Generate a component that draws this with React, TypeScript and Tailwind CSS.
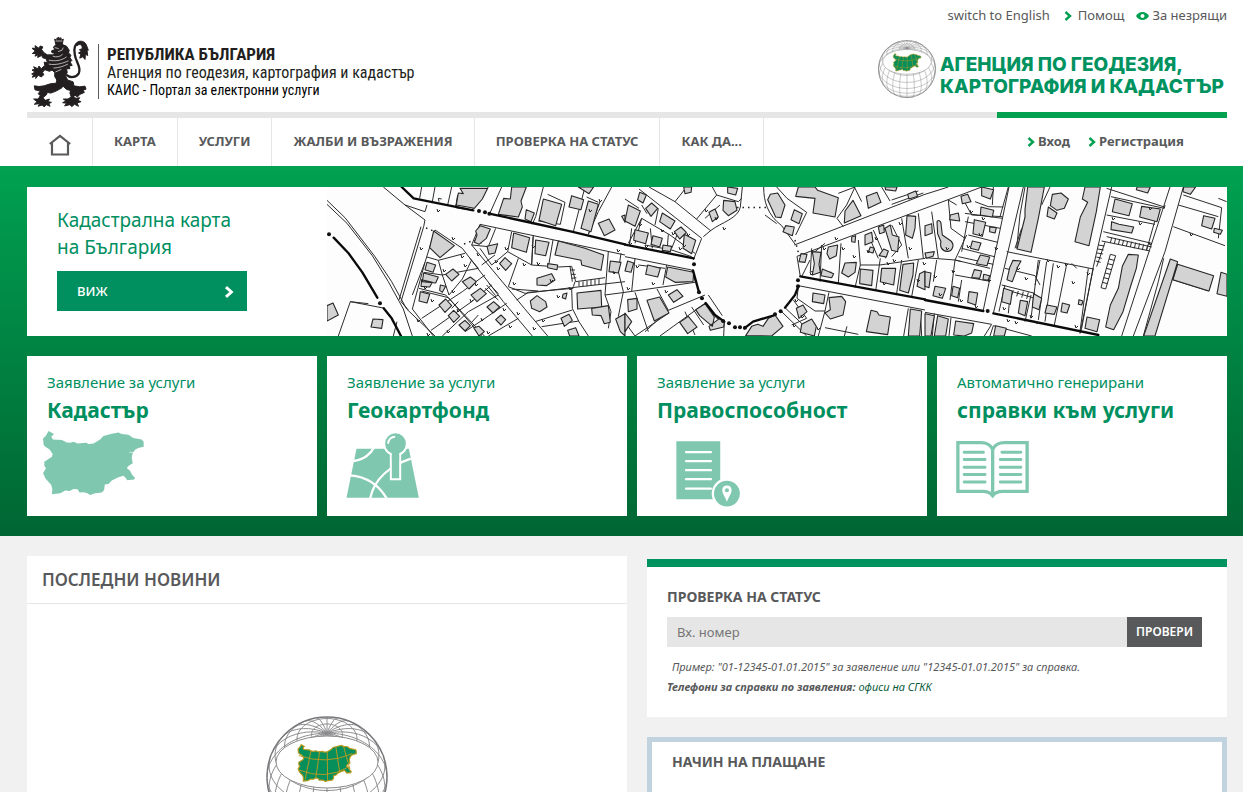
import React from "react";

const BULGARIA =
  "M85 243L101 252L93 260L98 268L125 270L140 277L150 278L160 275L172 280L198 278L205 282L220 280L240 268L250 258L275 251L295 247L305 252L325 254L340 264L365 268L371 275L371 290L355 294L345 299L338 310L335 322L338 340L326 347L320 354L330 362L336 374L345 384L342 389L322 391L315 382L310 377L295 382L275 392L265 402L254 404L252 420L245 428L225 430L210 435L200 429L190 427L178 428L172 418L160 417L148 423L135 422L120 430L95 433L96 418L93 405L75 385L72 377L68 370L77 355L72 347L72 335L95 320L97 312L88 298L75 290L70 285L68 265L76 258Z";

const rad = Math.PI / 180;
const TILT = 43 * rad;

function project(lat: number, lon: number): [number, number, boolean] {
  const f = lat * rad;
  const l = lon * rad;
  const x = 60 * Math.cos(f) * Math.sin(l);
  const y = -60 * (Math.cos(TILT) * Math.sin(f) - Math.sin(TILT) * Math.cos(f) * Math.cos(l));
  const front = Math.sin(TILT) * Math.sin(f) + Math.cos(TILT) * Math.cos(f) * Math.cos(l) >= 0;
  return [x, y, front];
}

function trace(points: [number, number, boolean][]): string {
  let d = "";
  let pen = false;
  for (const [x, y, front] of points) {
    if (front) {
      d += (pen ? "L" : "M") + x.toFixed(1) + " " + y.toFixed(1);
    }
    pen = front;
  }
  return d;
}

function graticule(): string {
  let d = "";
  for (let lon = -180; lon < 180; lon += 15) {
    const pts: [number, number, boolean][] = [];
    for (let lat = -90; lat <= 90; lat += 3) pts.push(project(lat, lon));
    d += trace(pts);
  }
  for (let lat = -45; lat <= 75; lat += 15) {
    const pts: [number, number, boolean][] = [];
    for (let lon = -180; lon <= 180; lon += 4) pts.push(project(lat, lon));
    d += trace(pts);
  }
  return d;
}

const GRATICULE = graticule();

function Globe({ className }: { className: string }) {
  return (
    <svg viewBox="-61 -61 122 122" className={className} aria-hidden="true">
      <circle r="60" fill="#fff" />
      <path d={GRATICULE} fill="none" stroke="#8b8b8d" strokeWidth="1" />
      <circle r="60" fill="none" stroke="#77787b" strokeWidth="1.4" />
      <ellipse cy="-15" rx="51" ry="26" fill="#fff" stroke="#8b8b8d" strokeWidth="1" />
      <g transform="translate(-42 -79) scale(.192)">
        <path d={BULGARIA} fill="#078f5b" stroke="#b99a1e" strokeWidth="6" strokeLinejoin="round" />
        <path
          d="M72 300Q215 350 350 290M72 375Q210 430 330 360M135 276L105 425M180 280L160 418M220 280L222 430M265 255L285 388M305 252L338 370"
          fill="none"
          stroke="#b99a1e"
          strokeWidth="5"
        />
      </g>
    </svg>
  );
}

function Lion() {
  return (
    <svg viewBox="12 10 176 216" className="h-[72px] w-[58px] shrink-0" aria-hidden="true">
      <g fill="#231f20" stroke="#231f20" strokeWidth="3" strokeLinejoin="round">
        <path d="M84 18L90 22L91 14L95 17L96 12L99 17L103 14L104 22L110 18L107 34H87Z" />
        <path d="M80 42L88 35L106 34L120 40L128 52L126 60L133 67L130 74L136 83L131 88L137 98L128 100L130 108L120 108L122 120L116 128L123 142L140 148L142 160L160 163L176 161L179 170L170 173L174 180L160 186L153 194L145 188L140 176L120 171L106 158L94 148L84 132L84 120L76 112L68 116L54 111L47 119L51 126L43 133L34 128L26 138L28 130L16 134L20 126L14 124L24 118L15 112L24 110L20 102L33 108L36 100L43 108L54 98L52 88L62 90L58 78L48 75L44 68L32 74L34 66L24 70L28 62L16 62L25 54L15 46L26 46L24 38L36 46L40 39L48 42L44 50L52 60L62 66L78 66L86 60L76 60L74 54L84 50Z" />
        <path d="M92 138L112 148L106 166L88 176L72 182L62 180L58 188L48 196L56 204L68 200L64 208L74 210L66 214L70 222L58 217L52 224L46 218L34 222L38 214L22 216L30 208L20 200L34 200L40 190L34 184L40 176L24 172L22 160L36 162L52 160L70 154L88 152Z" />
        <path d="M134 168L152 178L142 192L148 198L160 196L154 204L164 208L152 212L156 222L144 216L136 223L130 217L114 221L120 213L108 211L118 206L110 200L124 200L134 194L130 182Z" />
        <path d="M148 34C152 22 174 20 180 36L186 52L182 52L184 68L177 64L176 80L169 72L160 76L163 64L156 60L164 56L159 50L167 48C169 38 162 30 152 38Z" />
      </g>
      <path d="M118 126C132 138 150 134 157 122C166 104 148 88 145 66C141 48 144 30 162 28" fill="none" stroke="#231f20" strokeWidth="7" />
      <path
        d="M60 62C64 54 62 50 68 56M84 44L96 47M78 70C90 74 100 72 108 64M66 82C84 86 104 84 120 72M66 94C86 98 108 92 126 84M80 106C96 106 112 100 124 94M94 56L106 52L110 44M86 118L104 110M87 24H107"
        fill="none"
        stroke="#fff"
        strokeWidth="2"
      />
    </svg>
  );
}

type Sheet = { x: number; lines: string; bold: string; buildings: string; dots: [number, number][] };

const SHEETS: Sheet[] = [
  {
    x: -2,
    lines:
      "M6 46L60 98L150 215L200 290L245 372L330 453M6 58L66 115L142 212L190 290L235 372L262 453M175 6L240 60L300 105L296 125L228 350L250 375M240 60L300 80L306 60M288 125L222 345M330 135L300 232L262 372L325 453M330 135L412 190L535 350L622 453M465 118L900 210M465 118L440 180L550 312L598 370L668 453M40 453L76 350L180 370M76 350L130 356M205 453L216 410M290 6L284 40M330 6L322 50M380 6L368 60M398 30L392 65M490 6L440 76M530 6L494 86M655 6L632 95L622 118M668 28L720 52L706 118L640 108M780 6L745 140M825 50L790 148M860 6L820 80L790 148M785 36L820 52M306 216L340 226L420 205M296 262L352 270L372 330M282 310L362 330L478 453M290 318L370 338L470 453M352 270L460 250M372 330L412 282L440 225M290 400L412 320L480 270M318 436L440 350L500 300M352 453L430 380L520 330M420 440L480 400L545 355M490 453L580 400M435 220L460 250M465 190L500 240L548 200L560 140M548 200L620 240L700 246L740 244L752 290L840 278M470 240L510 210M620 240L624 155M580 220L550 305L600 325L740 308L900 290M575 345L610 322L745 310M740 310L742 370L762 410L790 453M630 410L742 375M650 425L762 408M850 200L840 330L858 380L850 430M888 205L880 260L895 320L885 370L880 395M840 330L900 322M684 165L672 235M625 152L620 238M512 130L490 185L440 180M735 244L742 290M750 290L745 305M762 290V304M774 289V304M786 287V304M798 285V302M810 283V300M822 281V299M736 255L750 255M738 268L752 268M740 280L754 278M400 30L392 68L442 76M342 50L340 40L350 42M485 300L512 332M480 310L520 345M492 296L520 326M340 226L352 270M380 370L400 350M440 412L460 390M560 312L640 318M300 232L262 330M470 175L445 165",
    bold: "M230 6L266 40L445 76M493 86L622 114L740 140L900 178M26 158L70 204L112 262L157 338M176 370L200 400L228 453",
    buildings:
      "M326 138L388 182L345 218L314 188ZM405 10L488 10L472 42L448 70L394 60L400 24L415 26ZM536 40L556 42L560 6L604 6L588 48L592 66L580 96L520 88ZM655 42L710 58L692 122L642 106ZM740 32L776 44L768 74L732 66ZM790 48L820 58L798 140L768 130ZM760 6L806 6L792 26ZM820 115L852 102L870 135L838 152ZM466 122L496 132L484 160L462 178L448 172L456 150L452 138ZM486 184L518 176L510 204L492 208ZM566 144L614 158L604 202L560 188ZM632 165L672 172L662 212L630 206ZM700 168L780 190L836 210L828 256L770 240L768 226L690 210ZM524 236L540 218L560 236L542 256ZM636 280L680 266L690 285L664 302L636 300ZM756 324L828 316L830 366L758 372ZM616 348L636 332L662 350L666 366L644 380L620 370ZM800 370L850 362L856 412L838 416L828 392L802 390ZM306 232L332 240L324 262L300 254ZM296 264L340 276L332 294L292 290ZM290 284L322 292L314 306L288 304ZM286 320L314 328L306 354L282 348ZM362 268L384 252L402 268L380 288ZM412 290L436 276L454 290L432 312ZM438 330L466 310L484 326L456 350ZM342 360L362 342L380 362L360 382ZM370 392L386 376L404 394L386 412ZM486 366L506 350L524 366L504 384ZM512 404L528 390L542 404L528 420ZM402 420L420 406L436 422L420 438ZM708 400L732 388L742 406L718 424ZM728 436L752 428L762 453L734 453ZM872 402L900 386V453L886 440ZM856 228L888 232L880 264L852 260ZM144 402L174 404L170 430L138 426ZM6 362L24 354L40 390L6 408ZM604 74L628 84L618 110L600 102ZM346 300L362 304L352 322L344 316ZM446 428L462 424L478 440L462 453ZM890 94L900 90V112ZM668 236L698 240L696 254L668 248ZM714 328L726 324L722 342L712 338Z",
    dots: [[12, 148], [165, 355], [462, 78], [480, 82], [493, 86]],
  },
  {
    x: 298,
    lines:
      "M72 6L150 50L258 138M0 42L42 70M42 12L230 160L205 225M150 50L185 6M215 102L275 30M275 30L262 6M352 6L346 66C340 100 290 112 258 136L235 155M416 6C416 50 428 90 470 122L512 180M455 6L486 40L545 82L512 150M508 180L900 28M516 214L900 70M516 214L526 275M0 215L200 255L212 292M0 322L210 292M30 322L70 440M96 312L130 376L240 330M0 412L30 453L130 385M105 453L240 355L275 400L298 410L296 453M130 376L60 440M125 240L114 300M30 220L20 320M50 100L135 150L210 205M50 100L30 175M130 148L126 200M640 25L690 6L665 60L636 100L655 125M710 50L688 6M770 6L795 48M800 45L880 18M800 58L895 24M590 180L585 290M648 175L640 295M700 165L706 240L690 308M766 220L752 318M706 240L765 240L900 220M745 135L782 220M830 100L850 220M880 85L895 220M830 225L815 325M880 225L860 335M520 302L900 375M555 225L530 275M612 322L600 378L580 453M600 428L700 448M850 370L836 453M516 340L570 378L600 378M470 380L545 453M482 370L570 453M505 345L545 400L500 420M520 305L516 340M658 453L666 424M800 120L830 180L800 215M886 380L890 453M275 30L340 50L350 40M240 100L285 60M560 190L556 260L620 262M60 180L140 195L200 215M10 175L50 100M420 90L455 116M40 240L120 250M14 178L20 130M82 190L76 130M160 140L140 190M66 86L50 60M100 70L90 120M600 175L570 200M730 150L760 220M250 330L292 392M180 380L210 450M200 366L236 420",
    bold: "M0 179L206 220M204 256L222 322M242 354L270 390L298 410M358 430L384 410L450 390M480 368L510 330L520 304M526 274L900 343",
    buildings:
      "M10 60L46 78L30 124L0 108ZM62 70L80 54L98 70L78 94ZM44 22L64 30L54 54L38 44ZM112 84L150 108L136 132L104 110ZM178 148L212 166L200 206L174 190ZM148 140L168 126L184 142L164 162ZM30 134L70 144L62 176L26 166ZM84 152L112 160L104 186L78 178ZM176 6H200L198 22L180 26ZM308 6L338 10L332 30L308 24ZM296 46L330 50L336 76L310 92L294 76ZM252 82L270 72L280 96L262 110ZM436 28L458 24L480 60L468 98L452 96L428 44ZM508 74L532 86L522 116L498 104ZM482 122L508 126L502 152L474 140ZM520 6L570 6L578 16L640 38L630 96L564 84L570 40L512 34ZM684 46L708 92L658 114L660 78ZM724 34L756 22L768 52L730 70ZM780 6L816 6L812 18L782 14ZM848 28L872 18L878 34L852 42ZM846 92L872 94L870 130L862 160L842 150ZM720 150L740 142L744 170L720 180ZM780 130L796 120L802 150L822 156L818 200L800 196ZM660 234L694 232L690 262L670 276L650 264ZM706 252L744 256L740 302L704 296ZM770 250L812 250L806 300L766 290ZM834 238L866 234L864 270L850 324L824 316ZM884 266L900 258V314L876 304ZM610 186L638 180L634 212L614 222L606 206ZM562 200L588 202L582 238L586 262L562 270L568 236ZM528 206L546 208L540 232L522 230ZM592 252L626 266L620 278L588 272ZM128 246L206 262L204 290L150 292L122 276ZM68 240L106 250L98 276L62 268ZM8 228L26 234L18 262L0 258ZM66 346L104 336L132 384L88 408ZM130 330L156 314L174 334L146 352ZM8 344L36 340V372L10 380ZM164 412L190 394L216 426L188 446ZM212 374L240 356L268 396L262 424L224 392ZM252 424L284 400L298 410L296 426L256 436ZM362 452L380 424L398 418L414 424L430 400L450 390L474 424L440 453ZM564 324L600 330L596 356L562 350ZM612 338L650 334L662 350L654 390L616 402L600 384L616 374ZM738 376L756 380L762 390L796 396L788 449L724 440ZM514 370L534 360L546 380L522 400ZM530 418L560 402L574 424L568 453L526 442ZM0 384L20 410L0 440ZM856 372L890 378L884 453H850ZM114 180L140 184L136 200L112 196ZM736 186L748 190L744 204L730 200ZM776 192L790 198L784 216L762 212ZM760 126L776 120L778 142L764 146ZM680 156L692 152L690 172L680 170Z",
    dots: [[207, 238], [222, 322], [231, 340], [294, 408], [312, 415], [330, 427], [345, 427], [360, 428], [450, 388], [467, 379], [519, 286], [519, 304]],
  },
  {
    x: 598,
    lines:
      "M0 28L70 6M0 70L120 25L170 6M252 6L175 375M295 6L205 385M245 200L505 252M375 6L350 60M560 6L505 245L470 430L465 445M545 90L690 118M558 35L718 70L720 60M535 140L680 175M735 6L590 453M775 6L720 200L625 453M760 60L880 95M745 125L900 182M775 30L890 68L880 160M20 80L40 220M70 45L78 130L120 160M0 218L90 225L195 250M35 225L25 290M90 225L75 345M90 270L190 288M110 285L100 350M125 150L90 225L110 230M110 35L140 90L232 95M150 50L190 65L235 66M205 6L202 60M110 190L208 215M130 150L218 172M130 95L110 200M340 225L318 400M365 230L340 405M385 235L360 410M425 238L388 420M490 250L465 440M240 250L330 272L345 300M230 300L330 325M222 380L240 300M120 85L232 100M300 410L318 330M0 382L200 418L178 453M205 422L320 453M195 453L205 422M78 398L72 453M28 385L22 453M716 220L700 290L655 453M752 238L862 275M742 284L850 318M880 40L905 50M250 6L225 95M545 10L718 66M700 70L665 195M505 250L465 445M300 6L285 90L275 190M540 172L515 245M530 168L675 198M545 155L680 186M520 180L538 183M518 192L536 195M516 204L534 207M514 216L530 220M512 228L527 232M560 158L556 174M572 160L568 176M584 163L580 179M596 165L592 181M608 168L604 184M620 170L616 186M632 173L628 190M644 175L640 192M656 178L652 194M668 181L664 196M556 208L528 308L542 312L572 212ZM552 222L568 226M548 236L564 240M544 250L560 254M540 264L556 268M536 278L552 282M532 292L548 296M265 316L260 330M280 318L275 334M295 320L290 338M310 322L305 342M440 235L455 250M100 215L205 238M290 130L270 190M120 110L226 130M235 312L330 340M345 225L330 300M95 60L70 45M250 385L256 320",
    bold: "M0 345L175 378M205 385L520 450",
    buildings:
      "M36 110C38 104 48 106 48 116L52 150L78 168C90 180 82 200 66 199C50 198 44 184 48 170L38 146ZM308 6L358 6L340 100L318 202L276 192L300 96L300 74ZM480 6L526 6L514 80L492 182L450 170L466 96L488 52L472 42ZM382 28L408 24L430 42L418 70L396 76L376 62ZM370 66L396 84L388 102L366 94ZM570 42L622 56L612 92L562 80ZM650 64L706 72L696 110L644 96ZM560 110L582 118L626 126L620 144L558 134ZM636 6H676L668 24L634 14ZM776 6H812L796 28L774 20ZM836 92L870 100L860 132L830 122ZM868 130L892 136L886 148L866 142ZM736 222L758 230L690 453H656ZM758 238L866 272L852 318L744 284ZM610 208L640 210L634 250L618 300L594 380L566 434L542 426L556 360L580 310L592 244ZM888 262L906 268V334L876 326ZM76 90L100 84L104 108L74 104ZM0 122L20 116L22 144L0 152ZM108 34L128 28L138 50L112 56ZM170 6L206 14L196 42L170 32ZM168 66L206 76L202 96L166 90ZM148 104L182 112L172 154L144 146ZM142 168L168 174L160 196L136 190ZM166 210L194 216L186 242L154 236ZM148 254L170 258L164 280L140 278ZM30 304L62 310L52 340L24 332ZM84 304L104 310L98 338L80 332ZM0 260L18 264L12 308L0 304ZM132 320L158 324L152 360L128 352ZM264 226L288 228L278 246L262 290L246 284L254 248ZM236 310L262 318L256 358L230 350ZM286 346L308 350L300 392L280 384ZM326 326L350 340L342 374L322 366ZM366 360L396 366L388 388L360 384ZM412 354L434 360L426 384L408 380ZM486 396L524 404L516 440L480 430ZM462 344L474 348L470 360L460 358ZM38 392L70 402L62 453H28ZM92 408L146 416L140 444L118 453L86 450ZM0 386L28 392L18 453H0ZM0 204L28 200L24 214L4 220ZM194 126L214 128L210 144L194 140ZM176 268L194 272L190 286L174 284ZM212 422L244 430L238 453H206Z",
    dots: [[188, 378]],
  },
];

const TICKS: [number, number][] = [
  [110, 22], [125, 50], [137, 77], [150, 66], [178, 60], [205, 58], [210, 75], [186, 95], [190, 125], [90, 132], [100, 146],
  [120, 143], [143, 112], [134, 68], [206, 140], [230, 108], [290, 62], [318, 58], [352, 60], [300, 100], [338, 103], [312, 36],
  [360, 46], [466, 137], [483, 85], [515, 60], [540, 63], [560, 75], [582, 60], [566, 72], [590, 92], [607, 88], [640, 58],
  [655, 30], [625, 83], [648, 118], [668, 60], [690, 80], [720, 72], [745, 94], [730, 78], [680, 132], [703, 128], [760, 85],
  [822, 55], [812, 35], [863, 46], [93, 60], [97, 99], [104, 112], [116, 82], [125, 103], [130, 122], [148, 96], [154, 131],
  [160, 144], [170, 80], [176, 121], [182, 138], [196, 76], [168, 73], [215, 132], [223, 92], [242, 100], [262, 22], [272, 12],
  [286, 84], [302, 55], [309, 78], [325, 95], [334, 42], [345, 45], [356, 57], [378, 22], [388, 30], [396, 40], [468, 112],
  [474, 128], [490, 140], [496, 60], [508, 50], [526, 68], [548, 50], [556, 95], [572, 35], [596, 75], [612, 106], [619, 60],
  [633, 112], [643, 23], [652, 46], [661, 92], [676, 120], [688, 134], [698, 90], [709, 134], [738, 76], [748, 138], [785, 30], [822, 20],
];

function CadastreMap() {
  return (
    <svg viewBox="0 0 900 149" preserveAspectRatio="xMidYMid slice" className="h-full w-full min-w-0 bg-[#fdfdfd]" role="img" aria-label="Кадастрална карта">
      {SHEETS.map((s) => (
        <g key={s.x} transform={`translate(${s.x} -2) scale(.33333)`} strokeLinejoin="round">
          <path d={s.lines} fill="none" stroke="#2b2b2b" strokeWidth="3" />
          <path d={s.buildings} fill="#d3d3d3" stroke="#262626" strokeWidth="3.3" />
          <path d={s.bold} fill="none" stroke="#0a0a0a" strokeWidth="7" strokeLinecap="round" />
          {s.dots.map(([x, y]) => (
            <circle key={`${x}-${y}`} cx={x} cy={y} r="6" fill="#111" />
          ))}
        </g>
      ))}
      <path
        d="M410 20.500H440M99 41L109 45M137 57L145 54M468 53L472 68"
        fill="none"
        stroke="#222"
        strokeWidth="1.5"
        strokeDasharray="1.500 4"
      />
      {TICKS.map(([x, y]) => (
        <path key={`${x}-${y}`} d={`M${x} ${y}l1 3l2 -2`} fill="none" stroke="#222" strokeWidth="1" />
      ))}
    </svg>
  );
}

function Chevron({ className }: { className: string }) {
  return (
    <svg viewBox="0 0 8 10" className={className} aria-hidden="true">
      <path d="M1.500 1L6 5L1.500 9" fill="none" stroke="currentColor" strokeWidth="2.400" />
    </svg>
  );
}

function BulgariaIcon() {
  return (
    <svg viewBox="68 243 304 192" className="h-16 w-[101px]" aria-hidden="true">
      <path d={BULGARIA} fill="#7fc7af" />
      <path d="M328 307H340" stroke="#fff" strokeWidth="2" />
    </svg>
  );
}

function MapPinIcon() {
  return (
    <svg viewBox="978 244 218 198" className="h-[66px] w-[73px]" aria-hidden="true">
      <path d="M1009 294H1166L1196 441H979Z" fill="#7fc7af" />
      <g fill="none" stroke="#fff" strokeWidth="7">
        <path d="M1000 331C1030 328 1052 310 1062 290M990 374C1035 378 1075 400 1100 444M1050 444C1062 385 1110 345 1172 324" />
      </g>
      <path d="M1112 308H1140V386H1112Z" fill="#7fc7af" stroke="#fff" strokeWidth="6" />
      <circle cx="1126" cy="279" r="34" fill="#7fc7af" stroke="#fff" strokeWidth="6" />
      <path d="M1115 300H1137V330H1115Z" fill="#7fc7af" />
      <path d="M1104 279C1104 267 1113 258 1125 258" fill="none" stroke="#fff" strokeWidth="6" />
    </svg>
  );
}

function DocumentIcon() {
  return (
    <svg viewBox="108 272 194 197" className="h-[66px] w-[65px]" aria-hidden="true">
      <path d="M109 273H240V446H109Z" fill="#7fc7af" />
      <path d="M138 305H212M138 332H212M138 359H212M138 386H212M138 414H212" stroke="#fff" strokeWidth="7" strokeLinecap="round" />
      <circle cx="260" cy="429" r="42" fill="#7fc7af" stroke="#fff" strokeWidth="7" />
      <path d="M260 405C251 405 246 411 246 419C246 430 256 440 260 454C264 440 274 430 274 419C274 411 269 405 260 405Z" fill="#fff" />
      <circle cx="260" cy="419" r="6" fill="#7fc7af" />
    </svg>
  );
}

function BookIcon() {
  return (
    <svg viewBox="948 273 219 172" className="h-[57px] w-[73px]" aria-hidden="true">
      <path
        d="M1058 298C1050 282 1040 278 1022 278H953V425H1028C1044 425 1052 430 1058 438C1064 430 1072 425 1088 425H1162V278H1094C1076 278 1066 282 1058 298ZM1058 296V432"
        fill="none"
        stroke="#7fc7af"
        strokeWidth="10"
      />
      <path
        d="M972 307H1030M972 329H1035M972 352H1035M972 374H1035M972 397H1035M1086 307H1143M1081 329H1143M1081 352H1143M1081 374H1143M1081 397H1143"
        stroke="#7fc7af"
        strokeWidth="9"
        strokeLinecap="round"
      />
    </svg>
  );
}

const NAV = ["КАРТА", "УСЛУГИ", "ЖАЛБИ И ВЪЗРАЖЕНИЯ", "ПРОВЕРКА НА СТАТУС", "КАК ДА..."];

function ServiceCard({ intro, title, inset, children }: { intro: string; title: string; inset: string; children: React.ReactNode }) {
  return (
    <a href="#services" className="flex h-40 flex-col bg-white pt-[14px] text-[#008f5f]">
      <span className="px-5 text-[15px] leading-6">{intro}</span>
      <strong className="px-5 text-[21px] leading-8 font-bold whitespace-nowrap">{title}</strong>
      <span className={inset}>{children}</span>
    </a>
  );
}

export default function App() {
  return (
    <div className="h-screen overflow-y-auto bg-[#f1f1f1] font-['Noto_Sans',sans-serif] text-[#58595b] [scrollbar-width:none]">
      <header className="bg-white pr-4 pl-[27px]">
        <div className="flex h-8 items-center justify-end text-[13px]">
          <a href="#en">switch to English</a>
          <a href="#help" className="ml-[14px] flex items-center">
            <Chevron className="mr-[6px] h-[10px] w-2 text-[#00a051]" />
            Помощ
          </a>
          <a href="#accessible" className="ml-3 flex items-center">
            <svg viewBox="0 0 13 8" className="mr-[3px] h-2 w-[13px]" aria-hidden="true">
              <path d="M0 4C3 -1.300 10 -1.300 13 4C10 9.300 3 9.300 0 4Z" fill="#00a051" />
              <circle cx="6.500" cy="4" r="2" fill="#fff" />
            </svg>
            За незрящи
          </a>
        </div>
        <div className="flex h-20 items-start justify-between">
          <a href="#home" className="flex pt-1 pl-1 text-[#231f20]" lang="bg">
            <Lion />
            <span className="mt-2 ml-[9px] flex h-[55px] flex-col border-l border-[#58595b] pl-2 font-['Roboto_Condensed','Liberation_Sans_Narrow','Open_Sans_Condensed',sans-serif] whitespace-nowrap">
              <span className="text-[17px] leading-5 font-bold">РЕПУБЛИКА БЪЛГАРИЯ</span>
              <span className="text-[16px] leading-[17px]">Агенция по геодезия, картография и кадастър</span>
              <span className="text-[14px] leading-[18px] text-black">КАИС - Портал за електронни услуги</span>
            </span>
          </a>
          <a href="#agency" className="flex pt-2 pr-[3px] text-[#00925f]">
            <Globe className="h-[58px] w-[58px] shrink-0" />
            <span className="mt-[14px] ml-1 flex flex-col font-['Inter',sans-serif] text-[19px] leading-[22px] font-extrabold whitespace-nowrap">
              <span>АГЕНЦИЯ ПО ГЕОДЕЗИЯ,</span>
              <span>КАРТОГРАФИЯ И КАДАСТЪР</span>
            </span>
          </a>
        </div>
        <div className="flex text-[13px] font-bold">
          <nav className="flex h-[54px] flex-1 border-t-[6px] border-[#e6e6e6] whitespace-nowrap">
            <a href="#home" aria-label="Начало" className="flex w-[66px] items-center justify-center border-r border-[#e6e6e6] pt-[6px]">
              <svg viewBox="0 0 22 22" className="h-[22px] w-[22px]" aria-hidden="true">
                <path d="M.800 10L11 2L21.200 10M3 9V20.500H19V9" fill="none" stroke="#58595b" strokeWidth="2.200" />
              </svg>
            </a>
            {NAV.map((item) => (
              <a key={item} href="#nav" className="flex items-center border-r border-[#e6e6e6] px-[21px]">
                {item}
              </a>
            ))}
          </nav>
          <div className="flex w-[230px] items-center border-t-[6px] border-[#00a051] pl-[30px]">
            <a href="#login" className="flex items-center">
              <Chevron className="mr-[3px] h-[10px] w-2 text-[#00a051]" />
              Вход
            </a>
            <a href="#register" className="ml-[18px] flex items-center">
              <Chevron className="mr-[3px] h-[10px] w-2 text-[#00a051]" />
              Регистрация
            </a>
          </div>
        </div>
      </header>

      <section className="bg-linear-to-b from-[#00a151] to-[#006633] pt-[21px] pr-4 pb-5 pl-[27px]">
        <div className="flex h-[149px] bg-white">
          <div className="w-[300px] shrink-0 pt-5 pl-[30px]">
            <h1 className="text-[19px] leading-[27px] text-[#008f5f]">
              Кадастрална карта
              <br />
              на България
            </h1>
            <button type="button" className="mt-[10px] flex h-10 w-[190px] items-center justify-between bg-[#008f5f] pt-px pr-[13px] pl-5 text-[13px] font-medium text-white">
              ВИЖ
              <Chevron className="h-3 w-[10px]" />
            </button>
          </div>
          <CadastreMap />
        </div>
        <div className="mt-5 grid grid-cols-[29fr_30fr_29fr_29fr] gap-[10px]">
          <ServiceCard intro="Заявление за услуги" title="Кадастър" inset="pt-[5px] pl-4">
            <BulgariaIcon />
          </ServiceCard>
          <ServiceCard intro="Заявление за услуги" title="Геокартфонд" inset="pt-[6px] pl-[19px]">
            <MapPinIcon />
          </ServiceCard>
          <ServiceCard intro="Заявление за услуги" title="Правоспособност" inset="pt-[15px] pl-[39px]">
            <DocumentIcon />
          </ServiceCard>
          <ServiceCard intro="Автоматично генерирани" title="справки към услуги" inset="pt-[15px] pl-[19px]">
            <BookIcon />
          </ServiceCard>
        </div>
      </section>

      <main className="grid grid-cols-[30fr_29fr] items-start gap-5 pt-5 pr-4 pl-[27px]">
        <section className="bg-white">
          <h2 className="border-b border-[#e6e6e6] px-[15px] text-[17px] leading-[47px] font-semibold">ПОСЛЕДНИ НОВИНИ</h2>
          <div className="flex justify-center pt-28 pb-28">
            <Globe className="h-[122px] w-[122px]" />
          </div>
        </section>
        <div className="pt-[3px]">
          <section className="border-t-8 border-[#00925f] bg-white px-5 pt-5 pb-5">
            <h2 className="text-[14px] leading-5 font-bold">
              <label htmlFor="number">ПРОВЕРКА НА СТАТУС</label>
            </h2>
            <form className="mt-[10px] mr-[5px] flex h-[30px]" onSubmit={(e) => e.preventDefault()}>
              <input id="number" type="text" placeholder="Вх. номер" className="min-w-0 flex-1 bg-[#e6e6e6] px-[10px] pt-px text-[13px] outline-none placeholder:text-[#757575]" />
              <button type="submit" className="w-[75px] bg-[#58595b] text-[12px] font-semibold text-white">
                ПРОВЕРИ
              </button>
            </form>
            <p className="mt-[10px] px-[5px] text-[11px] leading-5 italic">Пример: "01-12345-01.01.2015" за заявление или "12345-01.01.2015" за справка.</p>
            <p className="text-[11px] leading-5 italic">
              <strong>Телефони за справки по заявления:</strong>{" "}
              <a href="#offices" className="text-[#0b5b3b]">
                офиси на СГКК
              </a>
            </p>
          </section>
          <section className="mt-5 h-60 border-[5px] border-[#c1d3df] bg-white px-5 pt-[10px]">
            <h2 className="text-[14px] leading-5 font-bold">НАЧИН НА ПЛАЩАНЕ</h2>
          </section>
        </div>
      </main>
    </div>
  );
}
